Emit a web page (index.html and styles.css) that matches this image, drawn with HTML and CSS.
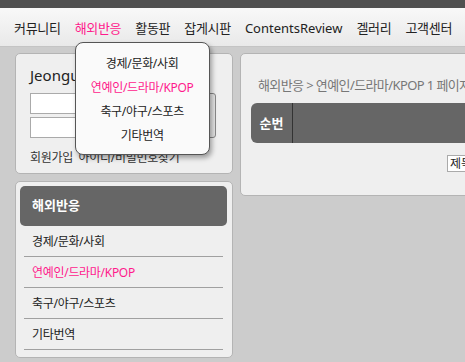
FILE: index.html
```html
<!DOCTYPE html>
<html lang="ko">
<head>
    <meta charset="UTF-8">
    <title>해외반응</title>
    <link rel="stylesheet" href="styles.css">
</head>
<body>
    <div class="topbar"></div>
    <div class="nav">
        <ul class="menu">
            <li>커뮤니티</li>
            <li class="active">해외반응
                <div class="dropdown">
                    <div>경제/문화/사회</div>
                    <div class="on">연예인/드라마/KPOP</div>
                    <div>축구/야구/스포츠</div>
                    <div>기타번역</div>
                </div>
            </li>
            <li>활동판</li>
            <li>잡게시판</li>
            <li class="latin">ContentsReview</li>
            <li>겔러리</li>
            <li>고객센터</li>
        </ul>
    </div>

    <div class="page">
        <div class="side">
            <div class="box login">
                <div class="user">Jeongu</div>
                <div class="login-row">
                    <div class="inputs">
                        <input type="text">
                        <input type="password">
                    </div>
                    <div class="login-btn"></div>
                </div>
                <div class="links">회원가입 &nbsp;아이디/비밀번호찾기</div>
            </div>

            <div class="box cat">
                <div class="cat-title">해외반응</div>
                <ul class="cat-list">
                    <li>경제/문화/사회</li>
                    <li class="on">연예인/드라마/KPOP</li>
                    <li>축구/야구/스포츠</li>
                    <li>기타번역</li>
                </ul>
            </div>
        </div>

        <div class="content">
            <div class="crumb">해외반응 &gt; 연예인/드라마/KPOP 1 페이지</div>
            <div class="thead">
                <div class="th-no">순번</div>
                <div class="th-rest"></div>
            </div>
            <div class="search">
                <span class="sel">제목</span>
            </div>
        </div>
    </div>
</body>
</html>
```

FILE: styles.css
```css
* {
    margin: 0;
    padding: 0;
    box-sizing: border-box;
}

body {
    background: #cccccc;
    font-family: "Noto Sans", "Noto Sans CJK KR", sans-serif;
    color: #222;
    overflow: hidden;
}

.topbar {
    height: 8px;
    background: #505050;
}

.nav {
    height: 39px;
    background: linear-gradient(#f8f8f8, #e9e9e9);
    border-bottom: 1px solid #c4c4c4;
}

.menu {
    list-style: none;
    display: flex;
    padding-left: 14px;
    gap: 14px;
}

.menu li {
    position: relative;
    font-size: 13px;
    line-height: 40px;
    white-space: nowrap;
    letter-spacing: -0.3px;
}

.menu li.latin {
    letter-spacing: 0;
}

.menu li.active {
    color: #ff1a8c;
}

.dropdown {
    position: absolute;
    top: 34px;
    left: 0;
    width: 135px;
    height: 113px;
    background: #fafafa;
    border: 1px solid #555;
    border-radius: 8px;
    box-shadow: 2px 3px 5px rgba(0, 0, 0, 0.35);
    padding-top: 9px;
    z-index: 5;
    letter-spacing: 0;
}

.dropdown div {
    color: #222;
    font-size: 12px;
    line-height: 24px;
    text-align: center;
    letter-spacing: -0.3px;
}

.dropdown div.on {
    color: #ff1a8c;
}

.page {
    display: flex;
    gap: 7px;
    padding: 6px 0 0 15px;
}

.side {
    width: 218px;
    display: flex;
    flex-direction: column;
    gap: 7px;
    flex-shrink: 0;
}

.box {
    background: #efefef;
    border: 1px solid #b4b4b4;
    border-radius: 5px;
}

.login {
    height: 121px;
    padding: 10px 16px 0 14px;
}

.user {
    font-size: 15px;
    line-height: 22px;
    margin-bottom: 7px;
    color: #222;
}

.login-row {
    display: flex;
    gap: 4px;
}

.inputs {
    display: flex;
    flex-direction: column;
    gap: 3px;
    width: 125px;
}

.inputs input {
    height: 21px;
    border: 1px solid #aaa;
    background: #fff;
}

.login-btn {
    flex: 1;
    height: 45px;
    border: 1px solid #888;
    border-radius: 3px;
    background: #e4e4e4;
}

.links {
    font-size: 12px;
    color: #333;
    margin-top: 10px;
    letter-spacing: -0.3px;
}

.cat {
    height: 177px;
    padding: 4px 5px 0 4px;
}

.cat-title {
    height: 40px;
    background: #666;
    border-radius: 5px;
    color: #fff;
    font-weight: bold;
    font-size: 13px;
    line-height: 39px;
    padding-left: 12px;
}

.cat-list {
    list-style: none;
    padding: 0 4px;
}

.cat-list li {
    font-size: 12px;
    height: 31px;
    line-height: 31px;
    border-bottom: 1px solid #a0a0a0;
    padding-left: 8px;
    letter-spacing: -0.3px;
}

.cat-list li.on {
    color: #ff1a8c;
}

.content {
    width: 600px;
    flex-shrink: 0;
    height: 143px;
    background: #efefef;
    border: 1px solid #b4b4b4;
    border-radius: 5px;
    padding: 21px 0 0 10px;
}

.crumb {
    font-size: 13px;
    color: #777;
    line-height: 20px;
    margin-left: 7px;
    white-space: nowrap;
    letter-spacing: -0.6px;
}

.thead {
    display: flex;
    height: 40px;
    margin-top: 8px;
    background: #666;
    border-radius: 6px 0 0 6px;
}

.th-no {
    width: 42px;
    color: #fff;
    font-weight: bold;
    font-size: 13px;
    line-height: 40px;
    text-align: center;
    border-right: 1px solid #333;
}

.search {
    display: flex;
    margin-top: 12px;
    padding-left: 196px;
}

.sel {
    width: 50px;
    height: 17px;
    background: #fff;
    border: 1px solid #aaa;
    font-size: 12px;
    line-height: 15px;
    padding-left: 2px;
    white-space: nowrap;
}
```
